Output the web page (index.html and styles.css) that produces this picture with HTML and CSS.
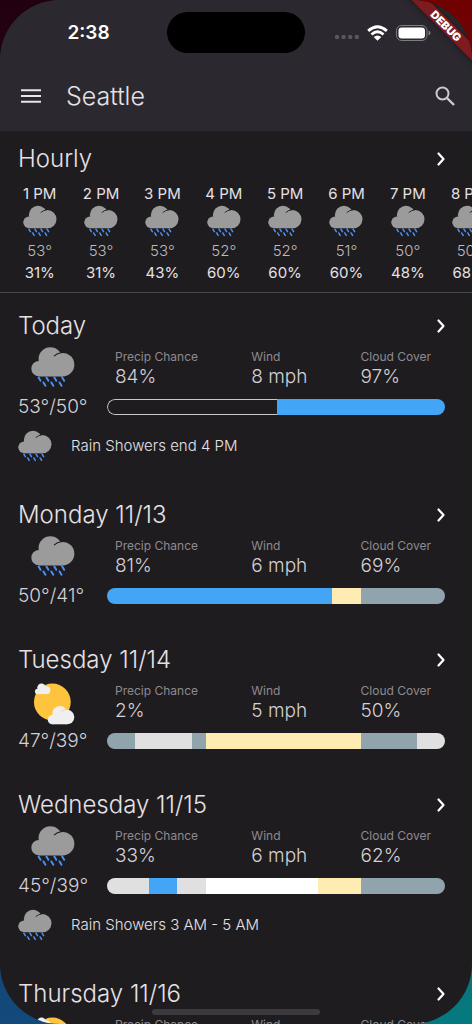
FILE: index.html
```
<!DOCTYPE html>
<html lang="en">
<head>
<meta charset="utf-8">
<meta name="viewport" content="width=device-width, initial-scale=1">
<title>Seattle weather</title>
<link rel="stylesheet" href="styles.css">
</head>
<body>
<svg class="sprite" aria-hidden="true">
  <symbol id="rain" viewBox="96 135 134 134">
    <g fill="#9b9b9b">
      <circle cx="120" cy="207" r="23"/>
      <circle cx="155" cy="178" r="36"/>
      <circle cx="192" cy="195" r="36"/>
      <path d="M120 195h72v36h-72z"/>
    </g>
    <path d="M166 169Q175 160 190 158" fill="none" stroke="#1e1c1f" stroke-width="3.5"/>
    <path d="M119 234l6 10M143 234l6 10M167 234l6 10M191 234l6 10M134 249l6 10M158 249l6 10M183 249l6 10" fill="none" stroke="#4a90f5" stroke-width="6" stroke-linecap="round"/>
  </symbol>
  <symbol id="sun" viewBox="96 116 134 134">
    <circle cx="161" cy="186" r="56" fill="#ffc43d"/>
    <g fill="#efeff0">
      <circle cx="116" cy="154" r="8"/><circle cx="128" cy="143" r="13"/><circle cx="143" cy="150" r="12"/><path d="M116 148h27v14h-27z"/>
      <circle cx="161" cy="240" r="14"/><circle cx="184" cy="221" r="23"/><circle cx="206" cy="232" r="22"/><path d="M161 230h45v24h-45z"/>
    </g>
    <path d="M189 215q6-5 13-6" fill="none" stroke="#ffc43d" stroke-width="2"/>
  </symbol>
  <symbol id="chevron" viewBox="0 0 8 14">
    <path d="M1.5 1.5L6.5 7L1.5 12.5" fill="none" stroke="#fff" stroke-width="2.2" stroke-linecap="round" stroke-linejoin="round"/>
  </symbol>
</svg>

<div class="phone">
  <header class="top">
    <div class="status">
      <time class="clock">2:38</time>
      <div class="island"></div>
      <div class="indicators">
        <svg class="signal" viewBox="0 0 24 5"><g fill="#59575d"><rect width="4" height="4" rx="1.2"/><rect x="6.6" width="4" height="4" rx="1.2"/><rect x="13.2" width="4" height="4" rx="1.2"/><rect x="19.8" width="4" height="4" rx="1.2"/></g></svg>
        <svg class="wifi" viewBox="0 0 22 16"><g fill="none" stroke="#fff" stroke-width="3"><path d="M1.2 5.8Q11-2.8 20.8 5.8"/><path d="M4.7 9.6Q11 4 17.3 9.6"/></g><path d="M7 12.2Q11 8.8 15 12.2L11 16Z" fill="#fff"/></svg>
        <svg class="battery" viewBox="0 0 35 16"><rect x=".5" y=".5" width="30.5" height="15" rx="5" fill="none" stroke="#7f7d83"/><rect x="2.5" y="2.5" width="26.5" height="11" rx="3.2" fill="#fff"/><path d="M32.5 5.5q2 .8 2 2.5t-2 2.5z" fill="#7f7d83"/></svg>
      </div>
    </div>
    <div class="toolbar">
      <button class="icon-button" aria-label="Menu"><svg class="menu-icon" viewBox="0 0 20 14"><path d="M0 1.2h20M0 7h20M0 12.8h20" stroke="#e9e3ea" stroke-width="2"/></svg></button>
      <h1>Seattle</h1>
      <button class="icon-button" aria-label="Search"><svg class="search-icon" viewBox="0 0 20 20"><circle cx="7.5" cy="7.5" r="6" fill="none" stroke="#cfc8d2" stroke-width="2"/><path d="M12 12l7 7" stroke="#cfc8d2" stroke-width="2.4"/></svg></button>
    </div>
  </header>

  <main>
    <section class="hourly">
      <div class="heading"><h2>Hourly</h2><button class="icon-button" aria-label="Open hourly"><svg class="chevron"><use href="#chevron"/></svg></button></div>
      <ol class="hours">
        <li><span>1 PM</span><svg><use href="#rain"/></svg><span class="temp">53°</span><span>31%</span></li>
        <li><span>2 PM</span><svg><use href="#rain"/></svg><span class="temp">53°</span><span>31%</span></li>
        <li><span>3 PM</span><svg><use href="#rain"/></svg><span class="temp">53°</span><span>43%</span></li>
        <li><span>4 PM</span><svg><use href="#rain"/></svg><span class="temp">52°</span><span>60%</span></li>
        <li><span>5 PM</span><svg><use href="#rain"/></svg><span class="temp">52°</span><span>60%</span></li>
        <li><span>6 PM</span><svg><use href="#rain"/></svg><span class="temp">51°</span><span>60%</span></li>
        <li><span>7 PM</span><svg><use href="#rain"/></svg><span class="temp">50°</span><span>48%</span></li>
        <li><span>8 PM</span><svg><use href="#rain"/></svg><span class="temp">50°</span><span>68%</span></li>
      </ol>
    </section>

    <section class="day">
      <div class="heading"><h2>Today</h2><button class="icon-button" aria-label="Open today"><svg class="chevron"><use href="#chevron"/></svg></button></div>
      <div class="summary">
        <svg class="sky"><use href="#rain"/></svg>
        <dl class="stats"><div><dt>Precip Chance</dt><dd>84%</dd></div><div><dt>Wind</dt><dd>8 mph</dd></div><div><dt>Cloud Cover</dt><dd>97%</dd></div></dl>
        <span class="range">53°/50°</span>
        <div class="bar"><i class="past" style="flex-grow:12"></i><i class="rainy" style="flex-grow:12"></i></div>
      </div>
      <p class="alert"><svg><use href="#rain"/></svg>Rain Showers end 4 PM</p>
    </section>

    <section class="day">
      <div class="heading"><h2>Monday 11/13</h2><button class="icon-button" aria-label="Open Monday"><svg class="chevron"><use href="#chevron"/></svg></button></div>
      <div class="summary">
        <svg class="sky"><use href="#rain"/></svg>
        <dl class="stats"><div><dt>Precip Chance</dt><dd>81%</dd></div><div><dt>Wind</dt><dd>6 mph</dd></div><div><dt>Cloud Cover</dt><dd>69%</dd></div></dl>
        <span class="range">50°/41°</span>
        <div class="bar"><i class="rainy" style="flex-grow:16"></i><i class="sunny" style="flex-grow:2"></i><i class="overcast" style="flex-grow:6"></i></div>
      </div>
    </section>

    <section class="day">
      <div class="heading"><h2>Tuesday 11/14</h2><button class="icon-button" aria-label="Open Tuesday"><svg class="chevron"><use href="#chevron"/></svg></button></div>
      <div class="summary">
        <svg class="sky"><use href="#sun"/></svg>
        <dl class="stats"><div><dt>Precip Chance</dt><dd>2%</dd></div><div><dt>Wind</dt><dd>5 mph</dd></div><div><dt>Cloud Cover</dt><dd>50%</dd></div></dl>
        <span class="range">47°/39°</span>
        <div class="bar"><i class="overcast" style="flex-grow:2"></i><i class="cloudy" style="flex-grow:4"></i><i class="overcast" style="flex-grow:1"></i><i class="sunny" style="flex-grow:11"></i><i class="overcast" style="flex-grow:4"></i><i class="cloudy" style="flex-grow:2"></i></div>
      </div>
    </section>

    <section class="day">
      <div class="heading"><h2>Wednesday 11/15</h2><button class="icon-button" aria-label="Open Wednesday"><svg class="chevron"><use href="#chevron"/></svg></button></div>
      <div class="summary">
        <svg class="sky"><use href="#rain"/></svg>
        <dl class="stats"><div><dt>Precip Chance</dt><dd>33%</dd></div><div><dt>Wind</dt><dd>6 mph</dd></div><div><dt>Cloud Cover</dt><dd>62%</dd></div></dl>
        <span class="range">45°/39°</span>
        <div class="bar"><i class="cloudy" style="flex-grow:3"></i><i class="rainy" style="flex-grow:2"></i><i class="cloudy" style="flex-grow:2"></i><i class="clear" style="flex-grow:8"></i><i class="sunny" style="flex-grow:3"></i><i class="overcast" style="flex-grow:6"></i></div>
      </div>
      <p class="alert"><svg><use href="#rain"/></svg>Rain Showers 3 AM - 5 AM</p>
    </section>

    <section class="day">
      <div class="heading"><h2>Thursday 11/16</h2><button class="icon-button" aria-label="Open Thursday"><svg class="chevron"><use href="#chevron"/></svg></button></div>
      <div class="summary">
        <svg class="sky"><use href="#sun"/></svg>
        <dl class="stats"><div><dt>Precip Chance</dt><dd></dd></div><div><dt>Wind</dt><dd></dd></div><div><dt>Cloud Cover</dt><dd></dd></div></dl>
      </div>
    </section>
  </main>

  <div class="debug">DEBUG</div>
  <div class="home-indicator"></div>
</div>
</body>
</html>
```

FILE: styles.css
```
* { box-sizing: border-box; margin: 0; padding: 0; }

body {
  font-family: Inter, "Liberation Sans", sans-serif;
  color: #e6e1e5;
  background:
    linear-gradient(#22000f, #124a7c) left / 50% 100% no-repeat,
    linear-gradient(#720000, #047a80) right / 50% 100% no-repeat;
}

svg { display: block; flex: none; overflow: visible; }
.sprite { position: absolute; width: 0; height: 0; }
symbol { overflow: visible; }

.phone {
  position: relative;
  display: flex;
  flex-direction: column;
  height: 100vh;
  overflow: hidden;
  border-radius: 60px;
  background: #1e1c1f;
}

.top { flex: none; background: #2b292f; }

.status {
  display: grid;
  grid-template-columns: 1fr 138px 1fr;
  align-items: center;
  height: 65px;
}
.clock { padding-left: 10px; text-align: center; font-size: 19px; font-weight: 600; color: #fff; }
.island { height: 41px; border-radius: 21px; background: #000; }
.indicators { display: flex; align-items: center; justify-content: flex-end; gap: 8px; padding-right: 41px; }
.signal { width: 24px; height: 5px; margin-top: 10px; }
.wifi { width: 21px; height: 16px; }
.battery { width: 35px; height: 16px; }

.toolbar { display: flex; align-items: center; height: 66px; padding: 0 17px 4px 21px; }
.toolbar h1 { flex: 1; padding-left: 25px; font-size: 25px; font-weight: 300; }
.icon-button { display: flex; align-items: center; justify-content: center; border: 0; background: none; }
.menu-icon { width: 20px; height: 14px; }
.search-icon { width: 20px; height: 20px; }

main { flex: 1; min-height: 0; overflow: hidden; }

.heading { display: flex; align-items: center; justify-content: space-between; height: 32px; }
.heading h2 { font-size: 24px; font-weight: 300; line-height: 34px; }
.chevron { width: 8px; height: 14px; }

.hourly { padding-top: 12px; border-bottom: 1px solid #4a484c; }
.hourly .heading { padding: 0 27px 0 18px; }
.hours { display: flex; padding: 10px 0 8px 9px; overflow: hidden; list-style: none; }
.hours li {
  display: flex;
  flex: 0 0 13vw;
  flex-direction: column;
  align-items: center;
  font-size: 15px;
  line-height: 22px;
}
.hours li > span:first-child { line-height: 18px; }
.hours svg { width: 34px; height: 34px; margin: 1px 0 2px; }
.hours .temp { font-weight: 300; color: #bdb9bd; }

.day { padding: 0 27px 36px 18px; }
.hourly + .day { padding-top: 17px; }
.summary {
  display: grid;
  grid-template-columns: minmax(70px, auto) 1fr;
  column-gap: 19px;
  row-gap: 6px;
  align-items: center;
  padding-top: 3px;
}
.sky { width: 44px; height: 44px; justify-self: center; }
.stats { display: flex; justify-content: space-between; align-self: end; padding: 0 14px 0 8px; }
.stats div:nth-child(2) { min-width: 56px; }
.stats dt { font-size: 12px; line-height: 16px; color: #8e8a8f; }
.stats dd { min-height: 24px; font-size: 19px; font-weight: 300; line-height: 24px; color: #d5d0d5; }
.range { font-size: 19px; font-weight: 300; line-height: 24px; color: #d5d0d5; }

.bar { display: flex; height: 16px; overflow: hidden; border-radius: 8px; }
.bar i { flex: 1 1 0; }
.past { border: 1px solid #cdc5cc; border-right: 0; border-radius: 8px 0 0 8px; }
.rainy { background: #42a5f5; }
.sunny { background: #ffecb3; }
.overcast { background: #90a4ae; }
.cloudy { background: #e0e0e0; }
.clear { background: #fff; }

.alert { display: flex; align-items: center; gap: 19px; padding-top: 10px; font-size: 15px; font-weight: 300; line-height: 20px; }
.alert svg { width: 34px; height: 34px; }

.debug {
  position: absolute;
  top: 20px;
  right: -54px;
  width: 160px;
  transform: rotate(45deg);
  text-align: center;
  font-size: 11px;
  font-weight: 900;
  line-height: 12px;
  color: #fff;
  background: #7e1b20;
  box-shadow: 0 0 6px rgba(0, 0, 0, .5);
}
.home-indicator {
  position: absolute;
  bottom: 9px;
  left: 50%;
  width: 168px;
  height: 6px;
  margin-left: -84px;
  border-radius: 3px;
  background: #3c3a3d;
}
```
